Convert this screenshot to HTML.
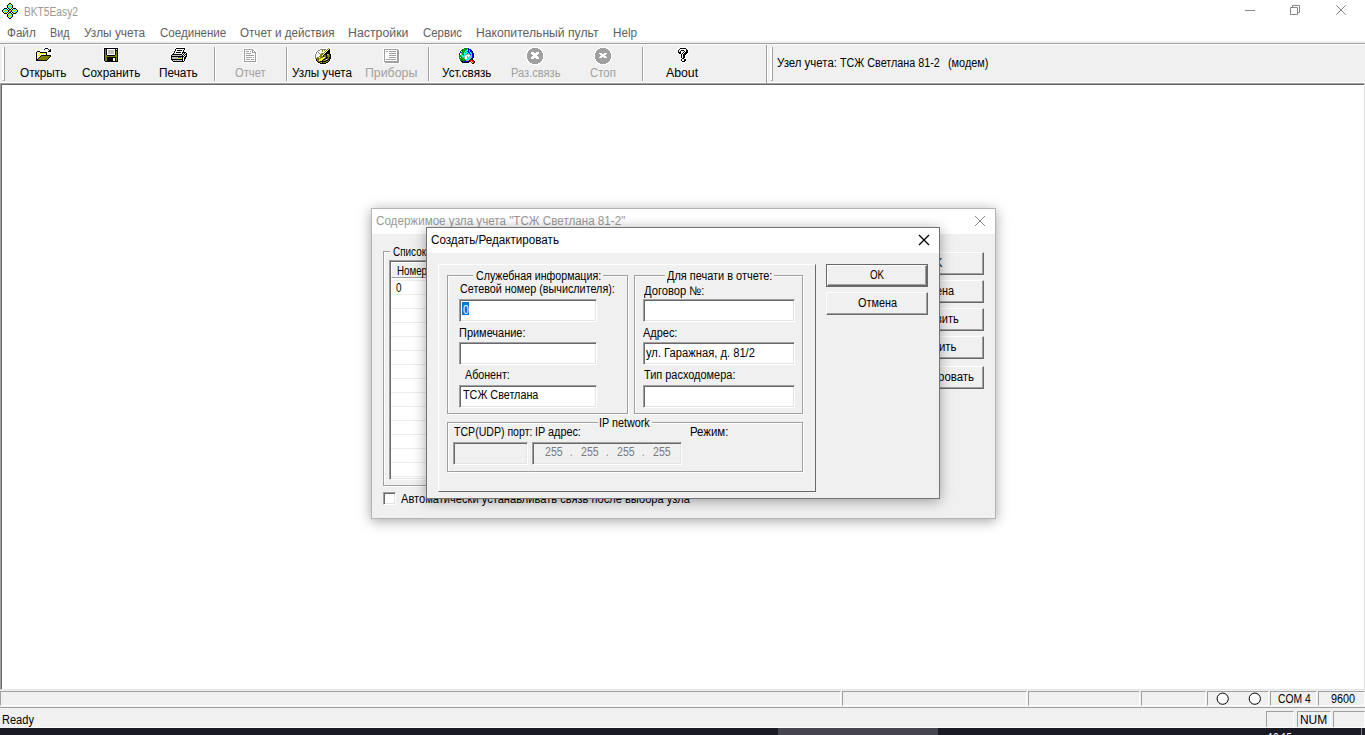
<!DOCTYPE html>
<html><head><meta charset="utf-8">
<style>
*{box-sizing:border-box;margin:0;padding:0}
html,body{width:1365px;height:735px;overflow:hidden;background:#fff;font-family:"Liberation Sans",sans-serif;}
.a{position:absolute}
.t{position:absolute;white-space:nowrap;line-height:1;transform-origin:0 0}
#titlebar{left:0;top:0;width:1365px;height:22px;background:#fff}
#menubar{left:0;top:22px;width:1365px;height:21px;background:#fff}
#toolbar{left:0;top:43px;width:1365px;height:40px;background:#f0f0f0;border-top:1px solid #a0a0a0;border-bottom:1px solid #fff;box-shadow:inset 0 1px 0 #fff}
.sep{position:absolute;top:47px;width:2px;height:34px;border-left:1px solid #a0a0a0;border-right:1px solid #fff}
#client{left:0;top:83px;width:1365px;height:607px;background:#fff;border:1px solid;border-color:#a0a0a0 #e3e3e3 #e3e3e3 #a0a0a0;box-shadow:inset 1px 1px 0 #696969}
#status1{left:0;top:690px;width:1365px;height:17px;background:#f0f0f0}
#status2{left:0;top:707px;width:1365px;height:21px;background:#f0f0f0;border-top:1px solid #a0a0a0}
#taskbar{left:0;top:728px;width:1365px;height:7px;background:#1a1a24}
.pane{position:absolute;top:691px;height:15px;border-left:1px solid #a0a0a0;border-top:1px solid #a0a0a0;border-right:1px solid #fff;border-bottom:1px solid #fff}
/* dialogs */
.dlg{position:absolute;background:#f0f0f0;}
.btn{position:absolute;background:#f0f0f0;border:1px solid;border-color:#fff #696969 #696969 #fff;box-shadow:inset -1px -1px 0 #a0a0a0}
.edit{position:absolute;background:#fff;border:1px solid;border-color:#a0a0a0 #fff #fff #a0a0a0;box-shadow:inset 1px 1px 0 #696969, inset -1px -1px 0 #e3e3e3}
.edit.dis{background:#f0f0f0}
.grp{position:absolute;border:1px solid #a0a0a0;box-shadow:inset 1px 1px 0 #fff, 1px 1px 0 #fff}
.cov{position:absolute;background:#f0f0f0;height:3px}
</style></head>
<body>
<!-- TITLE BAR -->
<div id="titlebar" class="a"></div>
<svg class="a" style="left:2px;top:3px" width="16" height="16" viewBox="0 0 16 16" shape-rendering="crispEdges"><rect x="7" y="0" width="2" height="1" fill="#000"/><rect x="6" y="1" width="1" height="1" fill="#000"/><rect x="7" y="1" width="1" height="1" fill="#00ffff"/><rect x="8" y="1" width="1" height="1" fill="#ffff00"/><rect x="9" y="1" width="1" height="1" fill="#000"/><rect x="5" y="2" width="1" height="1" fill="#000"/><rect x="6" y="2" width="1" height="1" fill="#00ffff"/><rect x="7" y="2" width="1" height="1" fill="#ffff00"/><rect x="8" y="2" width="1" height="1" fill="#00ffff"/><rect x="9" y="2" width="1" height="1" fill="#ffff00"/><rect x="10" y="2" width="1" height="1" fill="#000"/><rect x="5" y="3" width="1" height="1" fill="#000"/><rect x="6" y="3" width="1" height="1" fill="#ffff00"/><rect x="7" y="3" width="1" height="1" fill="#00ffff"/><rect x="8" y="3" width="1" height="1" fill="#ffff00"/><rect x="9" y="3" width="1" height="1" fill="#00ffff"/><rect x="10" y="3" width="1" height="1" fill="#000"/><rect x="5" y="4" width="1" height="1" fill="#000"/><rect x="6" y="4" width="1" height="1" fill="#00ffff"/><rect x="7" y="4" width="1" height="1" fill="#ffff00"/><rect x="8" y="4" width="1" height="1" fill="#00ffff"/><rect x="9" y="4" width="1" height="1" fill="#ffff00"/><rect x="10" y="4" width="1" height="1" fill="#000"/><rect x="2" y="5" width="3" height="1" fill="#000"/><rect x="6" y="5" width="1" height="1" fill="#000"/><rect x="7" y="5" width="1" height="1" fill="#00ffff"/><rect x="8" y="5" width="1" height="1" fill="#ffff00"/><rect x="9" y="5" width="1" height="1" fill="#000"/><rect x="11" y="5" width="3" height="1" fill="#000"/><rect x="1" y="6" width="1" height="1" fill="#000"/><rect x="2" y="6" width="1" height="1" fill="#00ffff"/><rect x="3" y="6" width="1" height="1" fill="#ffff00"/><rect x="4" y="6" width="1" height="1" fill="#00ffff"/><rect x="5" y="6" width="1" height="1" fill="#000"/><rect x="7" y="6" width="2" height="1" fill="#000"/><rect x="10" y="6" width="1" height="1" fill="#000"/><rect x="11" y="6" width="1" height="1" fill="#ffff00"/><rect x="12" y="6" width="1" height="1" fill="#00ffff"/><rect x="13" y="6" width="1" height="1" fill="#ffff00"/><rect x="14" y="6" width="1" height="1" fill="#000"/><rect x="0" y="7" width="1" height="1" fill="#000"/><rect x="1" y="7" width="1" height="1" fill="#00ffff"/><rect x="2" y="7" width="1" height="1" fill="#ffff00"/><rect x="3" y="7" width="1" height="1" fill="#00ffff"/><rect x="4" y="7" width="1" height="1" fill="#ffff00"/><rect x="5" y="7" width="1" height="1" fill="#00ffff"/><rect x="6" y="7" width="1" height="1" fill="#000"/><rect x="7" y="7" width="1" height="1" fill="#ff00ff"/><rect x="8" y="7" width="1" height="1" fill="#ffff00"/><rect x="9" y="7" width="1" height="1" fill="#000"/><rect x="10" y="7" width="1" height="1" fill="#ffff00"/><rect x="11" y="7" width="1" height="1" fill="#00ffff"/><rect x="12" y="7" width="1" height="1" fill="#ffff00"/><rect x="13" y="7" width="1" height="1" fill="#00ffff"/><rect x="14" y="7" width="1" height="1" fill="#ffff00"/><rect x="15" y="7" width="1" height="1" fill="#000"/><rect x="0" y="8" width="1" height="1" fill="#000"/><rect x="1" y="8" width="1" height="1" fill="#ffff00"/><rect x="2" y="8" width="1" height="1" fill="#00ffff"/><rect x="3" y="8" width="1" height="1" fill="#ffff00"/><rect x="4" y="8" width="1" height="1" fill="#00ffff"/><rect x="5" y="8" width="1" height="1" fill="#ffff00"/><rect x="6" y="8" width="1" height="1" fill="#000"/><rect x="7" y="8" width="1" height="1" fill="#ffff00"/><rect x="8" y="8" width="1" height="1" fill="#ff00ff"/><rect x="9" y="8" width="1" height="1" fill="#000"/><rect x="10" y="8" width="1" height="1" fill="#00ffff"/><rect x="11" y="8" width="1" height="1" fill="#ffff00"/><rect x="12" y="8" width="1" height="1" fill="#00ffff"/><rect x="13" y="8" width="1" height="1" fill="#ffff00"/><rect x="14" y="8" width="1" height="1" fill="#00ffff"/><rect x="15" y="8" width="1" height="1" fill="#000"/><rect x="1" y="9" width="1" height="1" fill="#000"/><rect x="2" y="9" width="1" height="1" fill="#ffff00"/><rect x="3" y="9" width="1" height="1" fill="#00ffff"/><rect x="4" y="9" width="1" height="1" fill="#ffff00"/><rect x="5" y="9" width="1" height="1" fill="#000"/><rect x="7" y="9" width="2" height="1" fill="#000"/><rect x="10" y="9" width="1" height="1" fill="#000"/><rect x="11" y="9" width="1" height="1" fill="#00ffff"/><rect x="12" y="9" width="1" height="1" fill="#ffff00"/><rect x="13" y="9" width="1" height="1" fill="#00ffff"/><rect x="14" y="9" width="1" height="1" fill="#000"/><rect x="2" y="10" width="3" height="1" fill="#000"/><rect x="6" y="10" width="1" height="1" fill="#000"/><rect x="7" y="10" width="1" height="1" fill="#ffff00"/><rect x="8" y="10" width="1" height="1" fill="#00ffff"/><rect x="9" y="10" width="1" height="1" fill="#000"/><rect x="11" y="10" width="3" height="1" fill="#000"/><rect x="5" y="11" width="1" height="1" fill="#000"/><rect x="6" y="11" width="1" height="1" fill="#ffff00"/><rect x="7" y="11" width="1" height="1" fill="#00ffff"/><rect x="8" y="11" width="1" height="1" fill="#ffff00"/><rect x="9" y="11" width="1" height="1" fill="#00ffff"/><rect x="10" y="11" width="1" height="1" fill="#000"/><rect x="5" y="12" width="1" height="1" fill="#000"/><rect x="6" y="12" width="1" height="1" fill="#00ffff"/><rect x="7" y="12" width="1" height="1" fill="#ffff00"/><rect x="8" y="12" width="1" height="1" fill="#00ffff"/><rect x="9" y="12" width="1" height="1" fill="#ffff00"/><rect x="10" y="12" width="1" height="1" fill="#000"/><rect x="5" y="13" width="1" height="1" fill="#000"/><rect x="6" y="13" width="1" height="1" fill="#ffff00"/><rect x="7" y="13" width="1" height="1" fill="#00ffff"/><rect x="8" y="13" width="1" height="1" fill="#ffff00"/><rect x="9" y="13" width="1" height="1" fill="#00ffff"/><rect x="10" y="13" width="1" height="1" fill="#000"/><rect x="6" y="14" width="1" height="1" fill="#000"/><rect x="7" y="14" width="1" height="1" fill="#ffff00"/><rect x="8" y="14" width="1" height="1" fill="#00ffff"/><rect x="9" y="14" width="1" height="1" fill="#000"/><rect x="7" y="15" width="2" height="1" fill="#000"/></svg>
<div class="t" style="left:24.20px;top:5.84px;font-size:12px;color:#999;transform:scaleX(0.8510);">BKT5Easy2</div>
<svg class="a" style="left:1240px;top:0" width="125" height="22" viewBox="0 0 125 22">
  <path d="M5 10.5h10" stroke="#868686" fill="none"/>
  <path d="M50.5 7.5h7v7h-7z M52.5 7.5v-2h7v7h-2" stroke="#868686" fill="none"/>
  <path d="M96.3 5.3l9.4 9.4M105.7 5.3l-9.4 9.4" stroke="#868686" fill="none"/>
</svg>
<!-- MENU BAR -->
<div id="menubar" class="a"></div>
<div class="a" style="left:0;top:41px;width:1365px;height:2px;background:#f0f0f0"></div>
<div class="t" style="left:7.20px;top:26.84px;font-size:12px;color:#606060;transform:scaleX(0.9729);">Файл</div>
<div class="t" style="left:50.30px;top:26.84px;font-size:12px;color:#606060;transform:scaleX(0.8937);">Вид</div>
<div class="t" style="left:83.60px;top:26.84px;font-size:12px;color:#606060;transform:scaleX(0.9877);">Узлы учета</div>
<div class="t" style="left:159.50px;top:26.84px;font-size:12px;color:#606060;transform:scaleX(0.9626);">Соединение</div>
<div class="t" style="left:240.00px;top:26.84px;font-size:12px;color:#606060;transform:scaleX(0.9673);">Отчет и действия</div>
<div class="t" style="left:348.00px;top:26.84px;font-size:12px;color:#606060;transform:scaleX(1.0269);">Настройки</div>
<div class="t" style="left:422.50px;top:26.84px;font-size:12px;color:#606060;transform:scaleX(0.9491);">Сервис</div>
<div class="t" style="left:476.00px;top:26.84px;font-size:12px;color:#606060;transform:scaleX(1.0138);">Накопительный пульт</div>
<div class="t" style="left:613.00px;top:26.84px;font-size:12px;color:#606060;transform:scaleX(0.9758);">Help</div>
<!-- TOOLBAR -->
<div id="toolbar" class="a"></div>
<div class="a" style="left:2px;top:47px;width:3px;height:34px;border-left:2px solid #fff;border-right:1px solid #a0a0a0;border-bottom:1px solid #a0a0a0"></div>
<svg class="a" style="left:35px;top:47px" width="18" height="15" viewBox="0 0 18 15" shape-rendering="crispEdges"><rect x="9" y="0" width="5" height="1" fill="#fff"/><rect x="8" y="1" width="2" height="1" fill="#fff"/><rect x="10" y="1" width="3" height="1" fill="#000"/><rect x="13" y="1" width="4" height="1" fill="#fff"/><rect x="8" y="2" width="1" height="1" fill="#fff"/><rect x="9" y="2" width="1" height="1" fill="#000"/><rect x="10" y="2" width="3" height="1" fill="#fff"/><rect x="13" y="2" width="1" height="1" fill="#000"/><rect x="14" y="2" width="1" height="1" fill="#fff"/><rect x="15" y="2" width="1" height="1" fill="#000"/><rect x="16" y="2" width="1" height="1" fill="#fff"/><rect x="1" y="3" width="5" height="1" fill="#fff"/><rect x="8" y="3" width="3" height="1" fill="#fff"/><rect x="12" y="3" width="2" height="1" fill="#fff"/><rect x="14" y="3" width="2" height="1" fill="#000"/><rect x="16" y="3" width="1" height="1" fill="#fff"/><rect x="0" y="4" width="2" height="1" fill="#fff"/><rect x="2" y="4" width="3" height="1" fill="#000"/><rect x="5" y="4" width="8" height="1" fill="#fff"/><rect x="13" y="4" width="3" height="1" fill="#000"/><rect x="16" y="4" width="1" height="1" fill="#fff"/><rect x="0" y="5" width="1" height="1" fill="#fff"/><rect x="1" y="5" width="1" height="1" fill="#000"/><rect x="2" y="5" width="1" height="1" fill="#ffff00"/><rect x="3" y="5" width="1" height="1" fill="#fff"/><rect x="4" y="5" width="1" height="1" fill="#ffff00"/><rect x="5" y="5" width="7" height="1" fill="#000"/><rect x="12" y="5" width="5" height="1" fill="#fff"/><rect x="0" y="6" width="1" height="1" fill="#fff"/><rect x="1" y="6" width="1" height="1" fill="#000"/><rect x="2" y="6" width="1" height="1" fill="#fff"/><rect x="3" y="6" width="1" height="1" fill="#ffff00"/><rect x="4" y="6" width="1" height="1" fill="#fff"/><rect x="5" y="6" width="1" height="1" fill="#ffff00"/><rect x="6" y="6" width="1" height="1" fill="#fff"/><rect x="7" y="6" width="1" height="1" fill="#ffff00"/><rect x="8" y="6" width="1" height="1" fill="#fff"/><rect x="9" y="6" width="1" height="1" fill="#ffff00"/><rect x="10" y="6" width="1" height="1" fill="#fff"/><rect x="11" y="6" width="1" height="1" fill="#000"/><rect x="12" y="6" width="1" height="1" fill="#fff"/><rect x="0" y="7" width="1" height="1" fill="#fff"/><rect x="1" y="7" width="1" height="1" fill="#000"/><rect x="2" y="7" width="1" height="1" fill="#ffff00"/><rect x="3" y="7" width="1" height="1" fill="#fff"/><rect x="4" y="7" width="1" height="1" fill="#ffff00"/><rect x="5" y="7" width="1" height="1" fill="#fff"/><rect x="6" y="7" width="1" height="1" fill="#ffff00"/><rect x="7" y="7" width="1" height="1" fill="#fff"/><rect x="8" y="7" width="1" height="1" fill="#ffff00"/><rect x="9" y="7" width="1" height="1" fill="#fff"/><rect x="10" y="7" width="1" height="1" fill="#ffff00"/><rect x="11" y="7" width="1" height="1" fill="#000"/><rect x="12" y="7" width="5" height="1" fill="#fff"/><rect x="0" y="8" width="1" height="1" fill="#fff"/><rect x="1" y="8" width="1" height="1" fill="#000"/><rect x="2" y="8" width="1" height="1" fill="#fff"/><rect x="3" y="8" width="1" height="1" fill="#ffff00"/><rect x="4" y="8" width="1" height="1" fill="#fff"/><rect x="5" y="8" width="1" height="1" fill="#ffff00"/><rect x="6" y="8" width="10" height="1" fill="#000"/><rect x="16" y="8" width="1" height="1" fill="#fff"/><rect x="0" y="9" width="1" height="1" fill="#fff"/><rect x="1" y="9" width="1" height="1" fill="#000"/><rect x="2" y="9" width="1" height="1" fill="#ffff00"/><rect x="3" y="9" width="1" height="1" fill="#fff"/><rect x="4" y="9" width="1" height="1" fill="#ffff00"/><rect x="5" y="9" width="1" height="1" fill="#000"/><rect x="6" y="9" width="9" height="1" fill="#808000"/><rect x="15" y="9" width="1" height="1" fill="#000"/><rect x="16" y="9" width="1" height="1" fill="#fff"/><rect x="0" y="10" width="1" height="1" fill="#fff"/><rect x="1" y="10" width="1" height="1" fill="#000"/><rect x="2" y="10" width="1" height="1" fill="#fff"/><rect x="3" y="10" width="1" height="1" fill="#ffff00"/><rect x="4" y="10" width="1" height="1" fill="#000"/><rect x="5" y="10" width="9" height="1" fill="#808000"/><rect x="14" y="10" width="1" height="1" fill="#000"/><rect x="15" y="10" width="2" height="1" fill="#fff"/><rect x="0" y="11" width="1" height="1" fill="#fff"/><rect x="1" y="11" width="1" height="1" fill="#000"/><rect x="2" y="11" width="1" height="1" fill="#ffff00"/><rect x="3" y="11" width="1" height="1" fill="#000"/><rect x="4" y="11" width="9" height="1" fill="#808000"/><rect x="13" y="11" width="1" height="1" fill="#000"/><rect x="14" y="11" width="2" height="1" fill="#fff"/><rect x="0" y="12" width="1" height="1" fill="#fff"/><rect x="1" y="12" width="2" height="1" fill="#000"/><rect x="3" y="12" width="9" height="1" fill="#808000"/><rect x="12" y="12" width="1" height="1" fill="#000"/><rect x="13" y="12" width="2" height="1" fill="#fff"/><rect x="0" y="13" width="1" height="1" fill="#fff"/><rect x="1" y="13" width="11" height="1" fill="#000"/><rect x="12" y="13" width="2" height="1" fill="#fff"/><rect x="0" y="14" width="13" height="1" fill="#fff"/></svg>
<svg class="a" style="left:103px;top:47px" width="16" height="16" viewBox="0 0 16 16" shape-rendering="crispEdges"><rect x="0" y="0" width="16" height="1" fill="#fff"/><rect x="0" y="1" width="1" height="1" fill="#fff"/><rect x="1" y="1" width="14" height="1" fill="#000"/><rect x="15" y="1" width="1" height="1" fill="#fff"/><rect x="0" y="2" width="1" height="1" fill="#fff"/><rect x="1" y="2" width="1" height="1" fill="#000"/><rect x="2" y="2" width="1" height="1" fill="#808000"/><rect x="3" y="2" width="1" height="1" fill="#000"/><rect x="4" y="2" width="8" height="1" fill="#fff"/><rect x="12" y="2" width="1" height="1" fill="#000"/><rect x="13" y="2" width="1" height="1" fill="#fff"/><rect x="14" y="2" width="1" height="1" fill="#000"/><rect x="15" y="2" width="1" height="1" fill="#fff"/><rect x="0" y="3" width="1" height="1" fill="#fff"/><rect x="1" y="3" width="1" height="1" fill="#000"/><rect x="2" y="3" width="1" height="1" fill="#808000"/><rect x="3" y="3" width="1" height="1" fill="#000"/><rect x="4" y="3" width="1" height="1" fill="#fff"/><rect x="5" y="3" width="6" height="1" fill="#c0c0c0"/><rect x="11" y="3" width="1" height="1" fill="#fff"/><rect x="12" y="3" width="3" height="1" fill="#000"/><rect x="15" y="3" width="1" height="1" fill="#fff"/><rect x="0" y="4" width="1" height="1" fill="#fff"/><rect x="1" y="4" width="1" height="1" fill="#000"/><rect x="2" y="4" width="1" height="1" fill="#808000"/><rect x="3" y="4" width="1" height="1" fill="#000"/><rect x="4" y="4" width="1" height="1" fill="#fff"/><rect x="5" y="4" width="6" height="1" fill="#c0c0c0"/><rect x="11" y="4" width="1" height="1" fill="#fff"/><rect x="12" y="4" width="1" height="1" fill="#000"/><rect x="13" y="4" width="1" height="1" fill="#808000"/><rect x="14" y="4" width="1" height="1" fill="#000"/><rect x="15" y="4" width="1" height="1" fill="#fff"/><rect x="0" y="5" width="1" height="1" fill="#fff"/><rect x="1" y="5" width="1" height="1" fill="#000"/><rect x="2" y="5" width="1" height="1" fill="#808000"/><rect x="3" y="5" width="1" height="1" fill="#000"/><rect x="4" y="5" width="1" height="1" fill="#fff"/><rect x="5" y="5" width="6" height="1" fill="#c0c0c0"/><rect x="11" y="5" width="1" height="1" fill="#fff"/><rect x="12" y="5" width="1" height="1" fill="#000"/><rect x="13" y="5" width="1" height="1" fill="#808000"/><rect x="14" y="5" width="1" height="1" fill="#000"/><rect x="15" y="5" width="1" height="1" fill="#fff"/><rect x="0" y="6" width="1" height="1" fill="#fff"/><rect x="1" y="6" width="1" height="1" fill="#000"/><rect x="2" y="6" width="1" height="1" fill="#808000"/><rect x="3" y="6" width="1" height="1" fill="#000"/><rect x="4" y="6" width="1" height="1" fill="#fff"/><rect x="5" y="6" width="6" height="1" fill="#c0c0c0"/><rect x="11" y="6" width="1" height="1" fill="#fff"/><rect x="12" y="6" width="1" height="1" fill="#000"/><rect x="13" y="6" width="1" height="1" fill="#808000"/><rect x="14" y="6" width="1" height="1" fill="#000"/><rect x="15" y="6" width="1" height="1" fill="#fff"/><rect x="0" y="7" width="1" height="1" fill="#fff"/><rect x="1" y="7" width="1" height="1" fill="#000"/><rect x="2" y="7" width="1" height="1" fill="#808000"/><rect x="3" y="7" width="1" height="1" fill="#000"/><rect x="4" y="7" width="8" height="1" fill="#fff"/><rect x="12" y="7" width="1" height="1" fill="#000"/><rect x="13" y="7" width="1" height="1" fill="#808000"/><rect x="14" y="7" width="1" height="1" fill="#000"/><rect x="15" y="7" width="1" height="1" fill="#fff"/><rect x="0" y="8" width="1" height="1" fill="#fff"/><rect x="1" y="8" width="1" height="1" fill="#000"/><rect x="2" y="8" width="2" height="1" fill="#808000"/><rect x="4" y="8" width="8" height="1" fill="#000"/><rect x="12" y="8" width="2" height="1" fill="#808000"/><rect x="14" y="8" width="1" height="1" fill="#000"/><rect x="15" y="8" width="1" height="1" fill="#fff"/><rect x="0" y="9" width="1" height="1" fill="#fff"/><rect x="1" y="9" width="1" height="1" fill="#000"/><rect x="2" y="9" width="12" height="1" fill="#808000"/><rect x="14" y="9" width="1" height="1" fill="#000"/><rect x="15" y="9" width="1" height="1" fill="#fff"/><rect x="0" y="10" width="1" height="1" fill="#fff"/><rect x="1" y="10" width="1" height="1" fill="#000"/><rect x="2" y="10" width="2" height="1" fill="#808000"/><rect x="4" y="10" width="9" height="1" fill="#000"/><rect x="13" y="10" width="1" height="1" fill="#808000"/><rect x="14" y="10" width="1" height="1" fill="#000"/><rect x="15" y="10" width="1" height="1" fill="#fff"/><rect x="0" y="11" width="1" height="1" fill="#fff"/><rect x="1" y="11" width="1" height="1" fill="#000"/><rect x="2" y="11" width="2" height="1" fill="#808000"/><rect x="4" y="11" width="6" height="1" fill="#000"/><rect x="10" y="11" width="2" height="1" fill="#fff"/><rect x="12" y="11" width="1" height="1" fill="#000"/><rect x="13" y="11" width="1" height="1" fill="#808000"/><rect x="14" y="11" width="1" height="1" fill="#000"/><rect x="15" y="11" width="1" height="1" fill="#fff"/><rect x="0" y="12" width="1" height="1" fill="#fff"/><rect x="1" y="12" width="1" height="1" fill="#000"/><rect x="2" y="12" width="2" height="1" fill="#808000"/><rect x="4" y="12" width="6" height="1" fill="#000"/><rect x="10" y="12" width="2" height="1" fill="#fff"/><rect x="12" y="12" width="1" height="1" fill="#000"/><rect x="13" y="12" width="1" height="1" fill="#808000"/><rect x="14" y="12" width="1" height="1" fill="#000"/><rect x="15" y="12" width="1" height="1" fill="#fff"/><rect x="0" y="13" width="1" height="1" fill="#fff"/><rect x="1" y="13" width="1" height="1" fill="#000"/><rect x="2" y="13" width="2" height="1" fill="#808000"/><rect x="4" y="13" width="6" height="1" fill="#000"/><rect x="10" y="13" width="2" height="1" fill="#fff"/><rect x="12" y="13" width="1" height="1" fill="#000"/><rect x="13" y="13" width="1" height="1" fill="#808000"/><rect x="14" y="13" width="1" height="1" fill="#000"/><rect x="15" y="13" width="1" height="1" fill="#fff"/><rect x="0" y="14" width="2" height="1" fill="#fff"/><rect x="2" y="14" width="13" height="1" fill="#000"/><rect x="15" y="14" width="1" height="1" fill="#fff"/><rect x="1" y="15" width="15" height="1" fill="#fff"/></svg>
<svg class="a" style="left:170px;top:47px" width="18" height="16" viewBox="0 0 18 16" shape-rendering="crispEdges"><rect x="5" y="0" width="11" height="1" fill="#fff"/><rect x="4" y="1" width="2" height="1" fill="#fff"/><rect x="6" y="1" width="9" height="1" fill="#000"/><rect x="15" y="1" width="1" height="1" fill="#fff"/><rect x="4" y="2" width="1" height="1" fill="#fff"/><rect x="5" y="2" width="1" height="1" fill="#000"/><rect x="6" y="2" width="8" height="1" fill="#fff"/><rect x="14" y="2" width="1" height="1" fill="#000"/><rect x="15" y="2" width="1" height="1" fill="#fff"/><rect x="3" y="3" width="2" height="1" fill="#fff"/><rect x="5" y="3" width="1" height="1" fill="#000"/><rect x="6" y="3" width="1" height="1" fill="#fff"/><rect x="7" y="3" width="5" height="1" fill="#000"/><rect x="12" y="3" width="1" height="1" fill="#fff"/><rect x="13" y="3" width="1" height="1" fill="#000"/><rect x="14" y="3" width="2" height="1" fill="#fff"/><rect x="3" y="4" width="1" height="1" fill="#fff"/><rect x="4" y="4" width="1" height="1" fill="#000"/><rect x="5" y="4" width="8" height="1" fill="#fff"/><rect x="13" y="4" width="1" height="1" fill="#000"/><rect x="14" y="4" width="3" height="1" fill="#fff"/><rect x="2" y="5" width="2" height="1" fill="#fff"/><rect x="4" y="5" width="1" height="1" fill="#000"/><rect x="5" y="5" width="1" height="1" fill="#fff"/><rect x="6" y="5" width="5" height="1" fill="#000"/><rect x="11" y="5" width="1" height="1" fill="#fff"/><rect x="12" y="5" width="4" height="1" fill="#000"/><rect x="16" y="5" width="2" height="1" fill="#fff"/><rect x="1" y="6" width="2" height="1" fill="#fff"/><rect x="3" y="6" width="1" height="1" fill="#000"/><rect x="4" y="6" width="8" height="1" fill="#fff"/><rect x="12" y="6" width="1" height="1" fill="#000"/><rect x="13" y="6" width="1" height="1" fill="#fff"/><rect x="14" y="6" width="1" height="1" fill="#000"/><rect x="15" y="6" width="1" height="1" fill="#fff"/><rect x="16" y="6" width="1" height="1" fill="#000"/><rect x="17" y="6" width="1" height="1" fill="#fff"/><rect x="0" y="7" width="2" height="1" fill="#fff"/><rect x="2" y="7" width="10" height="1" fill="#000"/><rect x="12" y="7" width="1" height="1" fill="#fff"/><rect x="13" y="7" width="1" height="1" fill="#000"/><rect x="14" y="7" width="1" height="1" fill="#fff"/><rect x="15" y="7" width="2" height="1" fill="#000"/><rect x="17" y="7" width="1" height="1" fill="#fff"/><rect x="0" y="8" width="1" height="1" fill="#fff"/><rect x="1" y="8" width="1" height="1" fill="#000"/><rect x="2" y="8" width="10" height="1" fill="#c0c0c0"/><rect x="12" y="8" width="1" height="1" fill="#000"/><rect x="13" y="8" width="1" height="1" fill="#fff"/><rect x="14" y="8" width="1" height="1" fill="#000"/><rect x="15" y="8" width="1" height="1" fill="#fff"/><rect x="16" y="8" width="1" height="1" fill="#000"/><rect x="17" y="8" width="1" height="1" fill="#fff"/><rect x="0" y="9" width="1" height="1" fill="#fff"/><rect x="1" y="9" width="13" height="1" fill="#000"/><rect x="14" y="9" width="1" height="1" fill="#fff"/><rect x="15" y="9" width="2" height="1" fill="#000"/><rect x="17" y="9" width="1" height="1" fill="#fff"/><rect x="0" y="10" width="1" height="1" fill="#fff"/><rect x="1" y="10" width="1" height="1" fill="#000"/><rect x="2" y="10" width="6" height="1" fill="#c0c0c0"/><rect x="8" y="10" width="3" height="1" fill="#404080"/><rect x="11" y="10" width="1" height="1" fill="#c0c0c0"/><rect x="12" y="10" width="1" height="1" fill="#000"/><rect x="13" y="10" width="1" height="1" fill="#fff"/><rect x="14" y="10" width="2" height="1" fill="#000"/><rect x="16" y="10" width="2" height="1" fill="#fff"/><rect x="0" y="11" width="1" height="1" fill="#fff"/><rect x="1" y="11" width="1" height="1" fill="#000"/><rect x="2" y="11" width="6" height="1" fill="#c0c0c0"/><rect x="8" y="11" width="3" height="1" fill="#ffff00"/><rect x="11" y="11" width="1" height="1" fill="#c0c0c0"/><rect x="12" y="11" width="1" height="1" fill="#000"/><rect x="13" y="11" width="1" height="1" fill="#fff"/><rect x="14" y="11" width="2" height="1" fill="#000"/><rect x="16" y="11" width="1" height="1" fill="#fff"/><rect x="0" y="12" width="1" height="1" fill="#fff"/><rect x="1" y="12" width="12" height="1" fill="#000"/><rect x="13" y="12" width="1" height="1" fill="#fff"/><rect x="14" y="12" width="1" height="1" fill="#000"/><rect x="15" y="12" width="2" height="1" fill="#fff"/><rect x="0" y="13" width="2" height="1" fill="#fff"/><rect x="2" y="13" width="1" height="1" fill="#000"/><rect x="3" y="13" width="9" height="1" fill="#c0c0c0"/><rect x="12" y="13" width="1" height="1" fill="#000"/><rect x="13" y="13" width="1" height="1" fill="#fff"/><rect x="14" y="13" width="1" height="1" fill="#000"/><rect x="15" y="13" width="1" height="1" fill="#fff"/><rect x="1" y="14" width="2" height="1" fill="#fff"/><rect x="3" y="14" width="11" height="1" fill="#000"/><rect x="14" y="14" width="2" height="1" fill="#fff"/><rect x="2" y="15" width="13" height="1" fill="#fff"/></svg>
<svg class="a" style="left:243px;top:48px" width="14" height="15" viewBox="0 0 14 15" shape-rendering="crispEdges"><rect x="0" y="0" width="11" height="1" fill="#fff"/><rect x="0" y="1" width="1" height="1" fill="#fff"/><rect x="1" y="1" width="9" height="1" fill="#a0a0a0"/><rect x="10" y="1" width="2" height="1" fill="#fff"/><rect x="0" y="2" width="1" height="1" fill="#fff"/><rect x="1" y="2" width="1" height="1" fill="#a0a0a0"/><rect x="2" y="2" width="7" height="1" fill="#fff"/><rect x="9" y="2" width="2" height="1" fill="#a0a0a0"/><rect x="11" y="2" width="2" height="1" fill="#fff"/><rect x="0" y="3" width="1" height="1" fill="#fff"/><rect x="1" y="3" width="1" height="1" fill="#a0a0a0"/><rect x="2" y="3" width="1" height="1" fill="#fff"/><rect x="3" y="3" width="3" height="1" fill="#a0a0a0"/><rect x="6" y="3" width="1" height="1" fill="#fff"/><rect x="7" y="3" width="1" height="1" fill="#a0a0a0"/><rect x="8" y="3" width="1" height="1" fill="#fff"/><rect x="9" y="3" width="1" height="1" fill="#a0a0a0"/><rect x="10" y="3" width="1" height="1" fill="#fff"/><rect x="11" y="3" width="1" height="1" fill="#a0a0a0"/><rect x="12" y="3" width="2" height="1" fill="#fff"/><rect x="0" y="4" width="1" height="1" fill="#fff"/><rect x="1" y="4" width="1" height="1" fill="#a0a0a0"/><rect x="2" y="4" width="7" height="1" fill="#fff"/><rect x="9" y="4" width="4" height="1" fill="#a0a0a0"/><rect x="13" y="4" width="1" height="1" fill="#fff"/><rect x="0" y="5" width="1" height="1" fill="#fff"/><rect x="1" y="5" width="1" height="1" fill="#a0a0a0"/><rect x="2" y="5" width="1" height="1" fill="#fff"/><rect x="3" y="5" width="5" height="1" fill="#a0a0a0"/><rect x="8" y="5" width="4" height="1" fill="#fff"/><rect x="12" y="5" width="1" height="1" fill="#a0a0a0"/><rect x="13" y="5" width="1" height="1" fill="#fff"/><rect x="0" y="6" width="1" height="1" fill="#fff"/><rect x="1" y="6" width="1" height="1" fill="#a0a0a0"/><rect x="2" y="6" width="10" height="1" fill="#fff"/><rect x="12" y="6" width="1" height="1" fill="#a0a0a0"/><rect x="13" y="6" width="1" height="1" fill="#fff"/><rect x="0" y="7" width="1" height="1" fill="#fff"/><rect x="1" y="7" width="1" height="1" fill="#a0a0a0"/><rect x="2" y="7" width="1" height="1" fill="#fff"/><rect x="3" y="7" width="8" height="1" fill="#a0a0a0"/><rect x="11" y="7" width="1" height="1" fill="#fff"/><rect x="12" y="7" width="1" height="1" fill="#a0a0a0"/><rect x="13" y="7" width="1" height="1" fill="#fff"/><rect x="0" y="8" width="1" height="1" fill="#fff"/><rect x="1" y="8" width="1" height="1" fill="#a0a0a0"/><rect x="2" y="8" width="10" height="1" fill="#fff"/><rect x="12" y="8" width="1" height="1" fill="#a0a0a0"/><rect x="13" y="8" width="1" height="1" fill="#fff"/><rect x="0" y="9" width="1" height="1" fill="#fff"/><rect x="1" y="9" width="1" height="1" fill="#a0a0a0"/><rect x="2" y="9" width="1" height="1" fill="#fff"/><rect x="3" y="9" width="6" height="1" fill="#a0a0a0"/><rect x="9" y="9" width="1" height="1" fill="#fff"/><rect x="10" y="9" width="1" height="1" fill="#a0a0a0"/><rect x="11" y="9" width="1" height="1" fill="#fff"/><rect x="12" y="9" width="1" height="1" fill="#a0a0a0"/><rect x="13" y="9" width="1" height="1" fill="#fff"/><rect x="0" y="10" width="1" height="1" fill="#fff"/><rect x="1" y="10" width="1" height="1" fill="#a0a0a0"/><rect x="2" y="10" width="10" height="1" fill="#fff"/><rect x="12" y="10" width="1" height="1" fill="#a0a0a0"/><rect x="13" y="10" width="1" height="1" fill="#fff"/><rect x="0" y="11" width="1" height="1" fill="#fff"/><rect x="1" y="11" width="1" height="1" fill="#a0a0a0"/><rect x="2" y="11" width="1" height="1" fill="#fff"/><rect x="3" y="11" width="4" height="1" fill="#a0a0a0"/><rect x="7" y="11" width="1" height="1" fill="#fff"/><rect x="8" y="11" width="3" height="1" fill="#a0a0a0"/><rect x="11" y="11" width="1" height="1" fill="#fff"/><rect x="12" y="11" width="1" height="1" fill="#a0a0a0"/><rect x="13" y="11" width="1" height="1" fill="#fff"/><rect x="0" y="12" width="1" height="1" fill="#fff"/><rect x="1" y="12" width="1" height="1" fill="#a0a0a0"/><rect x="2" y="12" width="10" height="1" fill="#fff"/><rect x="12" y="12" width="1" height="1" fill="#a0a0a0"/><rect x="13" y="12" width="1" height="1" fill="#fff"/><rect x="0" y="13" width="1" height="1" fill="#fff"/><rect x="1" y="13" width="12" height="1" fill="#a0a0a0"/><rect x="13" y="13" width="1" height="1" fill="#fff"/><rect x="0" y="14" width="14" height="1" fill="#fff"/></svg>
<svg class="a" style="left:314px;top:47px" width="18" height="18" viewBox="0 0 18 18" shape-rendering="crispEdges"><rect x="13" y="0" width="3" height="1" fill="#fff"/><rect x="5" y="1" width="9" height="1" fill="#fff"/><rect x="14" y="1" width="1" height="1" fill="#808000"/><rect x="15" y="1" width="2" height="1" fill="#fff"/><rect x="3" y="2" width="3" height="1" fill="#fff"/><rect x="6" y="2" width="6" height="1" fill="#808080"/><rect x="12" y="2" width="1" height="1" fill="#fff"/><rect x="13" y="2" width="1" height="1" fill="#808000"/><rect x="14" y="2" width="1" height="1" fill="#fff"/><rect x="15" y="2" width="1" height="1" fill="#000"/><rect x="16" y="2" width="1" height="1" fill="#fff"/><rect x="2" y="3" width="2" height="1" fill="#fff"/><rect x="4" y="3" width="2" height="1" fill="#808080"/><rect x="6" y="3" width="2" height="1" fill="#fff"/><rect x="8" y="3" width="1" height="1" fill="#808000"/><rect x="9" y="3" width="1" height="1" fill="#fff"/><rect x="10" y="3" width="1" height="1" fill="#808000"/><rect x="11" y="3" width="1" height="1" fill="#fff"/><rect x="12" y="3" width="1" height="1" fill="#808000"/><rect x="13" y="3" width="1" height="1" fill="#fff"/><rect x="14" y="3" width="2" height="1" fill="#000"/><rect x="16" y="3" width="1" height="1" fill="#fff"/><rect x="1" y="4" width="2" height="1" fill="#fff"/><rect x="3" y="4" width="1" height="1" fill="#808080"/><rect x="4" y="4" width="4" height="1" fill="#fff"/><rect x="8" y="4" width="1" height="1" fill="#808000"/><rect x="9" y="4" width="2" height="1" fill="#fff"/><rect x="11" y="4" width="1" height="1" fill="#808000"/><rect x="12" y="4" width="1" height="1" fill="#fff"/><rect x="13" y="4" width="3" height="1" fill="#000"/><rect x="16" y="4" width="1" height="1" fill="#fff"/><rect x="1" y="5" width="1" height="1" fill="#fff"/><rect x="2" y="5" width="1" height="1" fill="#808080"/><rect x="3" y="5" width="1" height="1" fill="#fff"/><rect x="4" y="5" width="1" height="1" fill="#808080"/><rect x="5" y="5" width="5" height="1" fill="#fff"/><rect x="10" y="5" width="1" height="1" fill="#808000"/><rect x="11" y="5" width="1" height="1" fill="#fff"/><rect x="12" y="5" width="4" height="1" fill="#000"/><rect x="16" y="5" width="1" height="1" fill="#fff"/><rect x="0" y="6" width="2" height="1" fill="#fff"/><rect x="2" y="6" width="1" height="1" fill="#808080"/><rect x="3" y="6" width="2" height="1" fill="#fff"/><rect x="5" y="6" width="1" height="1" fill="#808080"/><rect x="6" y="6" width="1" height="1" fill="#fff"/><rect x="7" y="6" width="3" height="1" fill="#808000"/><rect x="10" y="6" width="1" height="1" fill="#fff"/><rect x="11" y="6" width="5" height="1" fill="#000"/><rect x="16" y="6" width="2" height="1" fill="#fff"/><rect x="0" y="7" width="1" height="1" fill="#fff"/><rect x="1" y="7" width="1" height="1" fill="#808080"/><rect x="2" y="7" width="4" height="1" fill="#fff"/><rect x="6" y="7" width="3" height="1" fill="#808000"/><rect x="9" y="7" width="1" height="1" fill="#fff"/><rect x="10" y="7" width="3" height="1" fill="#000"/><rect x="13" y="7" width="2" height="1" fill="#c0c0c0"/><rect x="15" y="7" width="2" height="1" fill="#000"/><rect x="17" y="7" width="1" height="1" fill="#fff"/><rect x="0" y="8" width="1" height="1" fill="#fff"/><rect x="1" y="8" width="1" height="1" fill="#808080"/><rect x="2" y="8" width="4" height="1" fill="#fff"/><rect x="6" y="8" width="2" height="1" fill="#808000"/><rect x="8" y="8" width="1" height="1" fill="#fff"/><rect x="9" y="8" width="1" height="1" fill="#000"/><rect x="10" y="8" width="2" height="1" fill="#808000"/><rect x="12" y="8" width="1" height="1" fill="#000"/><rect x="13" y="8" width="3" height="1" fill="#808000"/><rect x="16" y="8" width="1" height="1" fill="#000"/><rect x="17" y="8" width="1" height="1" fill="#fff"/><rect x="0" y="9" width="1" height="1" fill="#fff"/><rect x="1" y="9" width="1" height="1" fill="#808080"/><rect x="2" y="9" width="3" height="1" fill="#fff"/><rect x="5" y="9" width="4" height="1" fill="#808000"/><rect x="9" y="9" width="1" height="1" fill="#000"/><rect x="10" y="9" width="2" height="1" fill="#808000"/><rect x="12" y="9" width="1" height="1" fill="#000"/><rect x="13" y="9" width="3" height="1" fill="#808000"/><rect x="16" y="9" width="1" height="1" fill="#000"/><rect x="17" y="9" width="1" height="1" fill="#fff"/><rect x="0" y="10" width="1" height="1" fill="#fff"/><rect x="1" y="10" width="1" height="1" fill="#808080"/><rect x="2" y="10" width="1" height="1" fill="#fff"/><rect x="3" y="10" width="2" height="1" fill="#808000"/><rect x="5" y="10" width="1" height="1" fill="#fff"/><rect x="6" y="10" width="3" height="1" fill="#808000"/><rect x="9" y="10" width="1" height="1" fill="#ffff00"/><rect x="10" y="10" width="1" height="1" fill="#fff"/><rect x="11" y="10" width="1" height="1" fill="#808000"/><rect x="12" y="10" width="2" height="1" fill="#000"/><rect x="14" y="10" width="1" height="1" fill="#808000"/><rect x="15" y="10" width="2" height="1" fill="#000"/><rect x="17" y="10" width="1" height="1" fill="#fff"/><rect x="0" y="11" width="1" height="1" fill="#fff"/><rect x="1" y="11" width="1" height="1" fill="#808080"/><rect x="2" y="11" width="5" height="1" fill="#808000"/><rect x="7" y="11" width="2" height="1" fill="#ffff00"/><rect x="9" y="11" width="1" height="1" fill="#fff"/><rect x="10" y="11" width="1" height="1" fill="#808000"/><rect x="11" y="11" width="2" height="1" fill="#000"/><rect x="13" y="11" width="2" height="1" fill="#808000"/><rect x="15" y="11" width="2" height="1" fill="#000"/><rect x="17" y="11" width="1" height="1" fill="#fff"/><rect x="0" y="12" width="2" height="1" fill="#fff"/><rect x="2" y="12" width="1" height="1" fill="#000"/><rect x="3" y="12" width="1" height="1" fill="#808000"/><rect x="4" y="12" width="1" height="1" fill="#c00000"/><rect x="5" y="12" width="2" height="1" fill="#ffff00"/><rect x="7" y="12" width="1" height="1" fill="#fff"/><rect x="8" y="12" width="1" height="1" fill="#ffff00"/><rect x="9" y="12" width="2" height="1" fill="#000"/><rect x="11" y="12" width="1" height="1" fill="#808000"/><rect x="12" y="12" width="1" height="1" fill="#fff"/><rect x="13" y="12" width="1" height="1" fill="#808000"/><rect x="14" y="12" width="2" height="1" fill="#000"/><rect x="16" y="12" width="2" height="1" fill="#fff"/><rect x="1" y="13" width="1" height="1" fill="#fff"/><rect x="2" y="13" width="1" height="1" fill="#000"/><rect x="3" y="13" width="2" height="1" fill="#808000"/><rect x="5" y="13" width="3" height="1" fill="#ffff00"/><rect x="8" y="13" width="1" height="1" fill="#000"/><rect x="9" y="13" width="3" height="1" fill="#808000"/><rect x="12" y="13" width="2" height="1" fill="#000"/><rect x="14" y="13" width="1" height="1" fill="#808000"/><rect x="15" y="13" width="1" height="1" fill="#000"/><rect x="16" y="13" width="1" height="1" fill="#fff"/><rect x="1" y="14" width="2" height="1" fill="#fff"/><rect x="3" y="14" width="1" height="1" fill="#000"/><rect x="4" y="14" width="2" height="1" fill="#808000"/><rect x="6" y="14" width="6" height="1" fill="#000"/><rect x="12" y="14" width="2" height="1" fill="#808000"/><rect x="14" y="14" width="1" height="1" fill="#000"/><rect x="15" y="14" width="2" height="1" fill="#fff"/><rect x="2" y="15" width="2" height="1" fill="#fff"/><rect x="4" y="15" width="2" height="1" fill="#000"/><rect x="6" y="15" width="1" height="1" fill="#808000"/><rect x="7" y="15" width="1" height="1" fill="#c0c0c0"/><rect x="8" y="15" width="1" height="1" fill="#000"/><rect x="9" y="15" width="3" height="1" fill="#808000"/><rect x="12" y="15" width="2" height="1" fill="#000"/><rect x="14" y="15" width="2" height="1" fill="#fff"/><rect x="3" y="16" width="3" height="1" fill="#fff"/><rect x="6" y="16" width="6" height="1" fill="#000"/><rect x="12" y="16" width="3" height="1" fill="#fff"/><rect x="5" y="17" width="8" height="1" fill="#fff"/></svg>
<svg class="a" style="left:383px;top:48px" width="17" height="16" viewBox="0 0 17 16" shape-rendering="crispEdges"><rect x="0" y="0" width="16" height="1" fill="#fff"/><rect x="0" y="1" width="1" height="1" fill="#fff"/><rect x="1" y="1" width="14" height="1" fill="#a0a0a0"/><rect x="15" y="1" width="2" height="1" fill="#fff"/><rect x="0" y="2" width="1" height="1" fill="#fff"/><rect x="1" y="2" width="1" height="1" fill="#a0a0a0"/><rect x="2" y="2" width="12" height="1" fill="#fff"/><rect x="14" y="2" width="2" height="1" fill="#a0a0a0"/><rect x="16" y="2" width="1" height="1" fill="#fff"/><rect x="0" y="3" width="1" height="1" fill="#fff"/><rect x="1" y="3" width="1" height="1" fill="#a0a0a0"/><rect x="2" y="3" width="1" height="1" fill="#fff"/><rect x="3" y="3" width="2" height="1" fill="#a0a0a0"/><rect x="5" y="3" width="1" height="1" fill="#fff"/><rect x="6" y="3" width="7" height="1" fill="#a0a0a0"/><rect x="13" y="3" width="1" height="1" fill="#fff"/><rect x="14" y="3" width="2" height="1" fill="#a0a0a0"/><rect x="16" y="3" width="1" height="1" fill="#fff"/><rect x="0" y="4" width="1" height="1" fill="#fff"/><rect x="1" y="4" width="1" height="1" fill="#a0a0a0"/><rect x="2" y="4" width="12" height="1" fill="#fff"/><rect x="14" y="4" width="2" height="1" fill="#a0a0a0"/><rect x="16" y="4" width="1" height="1" fill="#fff"/><rect x="0" y="5" width="1" height="1" fill="#fff"/><rect x="1" y="5" width="1" height="1" fill="#a0a0a0"/><rect x="2" y="5" width="4" height="1" fill="#fff"/><rect x="6" y="5" width="7" height="1" fill="#a0a0a0"/><rect x="13" y="5" width="1" height="1" fill="#fff"/><rect x="14" y="5" width="2" height="1" fill="#a0a0a0"/><rect x="16" y="5" width="1" height="1" fill="#fff"/><rect x="0" y="6" width="1" height="1" fill="#fff"/><rect x="1" y="6" width="1" height="1" fill="#a0a0a0"/><rect x="2" y="6" width="12" height="1" fill="#fff"/><rect x="14" y="6" width="2" height="1" fill="#a0a0a0"/><rect x="16" y="6" width="1" height="1" fill="#fff"/><rect x="0" y="7" width="1" height="1" fill="#fff"/><rect x="1" y="7" width="1" height="1" fill="#a0a0a0"/><rect x="2" y="7" width="4" height="1" fill="#fff"/><rect x="6" y="7" width="7" height="1" fill="#a0a0a0"/><rect x="13" y="7" width="1" height="1" fill="#fff"/><rect x="14" y="7" width="2" height="1" fill="#a0a0a0"/><rect x="16" y="7" width="1" height="1" fill="#fff"/><rect x="0" y="8" width="1" height="1" fill="#fff"/><rect x="1" y="8" width="1" height="1" fill="#a0a0a0"/><rect x="2" y="8" width="12" height="1" fill="#fff"/><rect x="14" y="8" width="2" height="1" fill="#a0a0a0"/><rect x="16" y="8" width="1" height="1" fill="#fff"/><rect x="0" y="9" width="1" height="1" fill="#fff"/><rect x="1" y="9" width="1" height="1" fill="#a0a0a0"/><rect x="2" y="9" width="4" height="1" fill="#fff"/><rect x="6" y="9" width="7" height="1" fill="#a0a0a0"/><rect x="13" y="9" width="1" height="1" fill="#fff"/><rect x="14" y="9" width="2" height="1" fill="#a0a0a0"/><rect x="16" y="9" width="1" height="1" fill="#fff"/><rect x="0" y="10" width="1" height="1" fill="#fff"/><rect x="1" y="10" width="1" height="1" fill="#a0a0a0"/><rect x="2" y="10" width="12" height="1" fill="#fff"/><rect x="14" y="10" width="2" height="1" fill="#a0a0a0"/><rect x="16" y="10" width="1" height="1" fill="#fff"/><rect x="0" y="11" width="1" height="1" fill="#fff"/><rect x="1" y="11" width="1" height="1" fill="#a0a0a0"/><rect x="2" y="11" width="1" height="1" fill="#fff"/><rect x="3" y="11" width="10" height="1" fill="#a0a0a0"/><rect x="13" y="11" width="1" height="1" fill="#fff"/><rect x="14" y="11" width="2" height="1" fill="#a0a0a0"/><rect x="16" y="11" width="1" height="1" fill="#fff"/><rect x="0" y="12" width="1" height="1" fill="#fff"/><rect x="1" y="12" width="1" height="1" fill="#a0a0a0"/><rect x="2" y="12" width="12" height="1" fill="#fff"/><rect x="14" y="12" width="2" height="1" fill="#a0a0a0"/><rect x="16" y="12" width="1" height="1" fill="#fff"/><rect x="0" y="13" width="1" height="1" fill="#fff"/><rect x="1" y="13" width="15" height="1" fill="#a0a0a0"/><rect x="16" y="13" width="1" height="1" fill="#fff"/><rect x="0" y="14" width="2" height="1" fill="#fff"/><rect x="2" y="14" width="14" height="1" fill="#a0a0a0"/><rect x="16" y="14" width="1" height="1" fill="#fff"/><rect x="1" y="15" width="16" height="1" fill="#fff"/></svg>
<svg class="a" style="left:458px;top:47px" width="18" height="18" viewBox="0 0 18 18" shape-rendering="crispEdges"><rect x="5" y="0" width="7" height="1" fill="#fff"/><rect x="3" y="1" width="3" height="1" fill="#fff"/><rect x="6" y="1" width="3" height="1" fill="#008000"/><rect x="9" y="1" width="1" height="1" fill="#00c000"/><rect x="10" y="1" width="1" height="1" fill="#0000ff"/><rect x="11" y="1" width="3" height="1" fill="#fff"/><rect x="2" y="2" width="2" height="1" fill="#fff"/><rect x="4" y="2" width="2" height="1" fill="#008000"/><rect x="6" y="2" width="2" height="1" fill="#00c000"/><rect x="8" y="2" width="1" height="1" fill="#008000"/><rect x="9" y="2" width="1" height="1" fill="#00ffff"/><rect x="10" y="2" width="3" height="1" fill="#0000ff"/><rect x="13" y="2" width="2" height="1" fill="#fff"/><rect x="1" y="3" width="2" height="1" fill="#fff"/><rect x="3" y="3" width="2" height="1" fill="#008000"/><rect x="5" y="3" width="1" height="1" fill="#00c000"/><rect x="6" y="3" width="1" height="1" fill="#008000"/><rect x="7" y="3" width="1" height="1" fill="#00c000"/><rect x="8" y="3" width="2" height="1" fill="#00ffff"/><rect x="10" y="3" width="1" height="1" fill="#0000ff"/><rect x="11" y="3" width="1" height="1" fill="#00ffff"/><rect x="12" y="3" width="1" height="1" fill="#0000ff"/><rect x="13" y="3" width="1" height="1" fill="#000"/><rect x="14" y="3" width="2" height="1" fill="#fff"/><rect x="1" y="4" width="1" height="1" fill="#fff"/><rect x="2" y="4" width="1" height="1" fill="#008000"/><rect x="3" y="4" width="1" height="1" fill="#fff"/><rect x="4" y="4" width="1" height="1" fill="#008000"/><rect x="5" y="4" width="2" height="1" fill="#00c000"/><rect x="7" y="4" width="2" height="1" fill="#00ffff"/><rect x="9" y="4" width="2" height="1" fill="#0000ff"/><rect x="11" y="4" width="1" height="1" fill="#00ffff"/><rect x="12" y="4" width="2" height="1" fill="#0000ff"/><rect x="14" y="4" width="1" height="1" fill="#000"/><rect x="15" y="4" width="1" height="1" fill="#fff"/><rect x="0" y="5" width="2" height="1" fill="#fff"/><rect x="2" y="5" width="1" height="1" fill="#0000ff"/><rect x="3" y="5" width="1" height="1" fill="#008000"/><rect x="4" y="5" width="1" height="1" fill="#00c000"/><rect x="5" y="5" width="1" height="1" fill="#008000"/><rect x="6" y="5" width="1" height="1" fill="#00ffff"/><rect x="7" y="5" width="1" height="1" fill="#00c000"/><rect x="8" y="5" width="2" height="1" fill="#00ffff"/><rect x="10" y="5" width="2" height="1" fill="#0000ff"/><rect x="12" y="5" width="1" height="1" fill="#00ffff"/><rect x="13" y="5" width="1" height="1" fill="#0000ff"/><rect x="14" y="5" width="1" height="1" fill="#000"/><rect x="15" y="5" width="2" height="1" fill="#fff"/><rect x="0" y="6" width="1" height="1" fill="#fff"/><rect x="1" y="6" width="1" height="1" fill="#0000ff"/><rect x="2" y="6" width="1" height="1" fill="#fff"/><rect x="3" y="6" width="1" height="1" fill="#00ffff"/><rect x="4" y="6" width="1" height="1" fill="#008000"/><rect x="5" y="6" width="1" height="1" fill="#00c000"/><rect x="6" y="6" width="3" height="1" fill="#00ffff"/><rect x="9" y="6" width="1" height="1" fill="#0000ff"/><rect x="10" y="6" width="1" height="1" fill="#00ffff"/><rect x="11" y="6" width="1" height="1" fill="#0000ff"/><rect x="12" y="6" width="2" height="1" fill="#00ffff"/><rect x="14" y="6" width="1" height="1" fill="#0000ff"/><rect x="15" y="6" width="1" height="1" fill="#000"/><rect x="16" y="6" width="1" height="1" fill="#fff"/><rect x="0" y="7" width="1" height="1" fill="#fff"/><rect x="1" y="7" width="1" height="1" fill="#0000ff"/><rect x="2" y="7" width="1" height="1" fill="#fff"/><rect x="3" y="7" width="1" height="1" fill="#00ffff"/><rect x="4" y="7" width="1" height="1" fill="#00c000"/><rect x="5" y="7" width="1" height="1" fill="#008000"/><rect x="6" y="7" width="2" height="1" fill="#00ffff"/><rect x="8" y="7" width="4" height="1" fill="#b8a4a4"/><rect x="12" y="7" width="1" height="1" fill="#0000ff"/><rect x="13" y="7" width="1" height="1" fill="#00ffff"/><rect x="14" y="7" width="1" height="1" fill="#0000ff"/><rect x="15" y="7" width="1" height="1" fill="#000"/><rect x="16" y="7" width="1" height="1" fill="#fff"/><rect x="0" y="8" width="1" height="1" fill="#fff"/><rect x="1" y="8" width="1" height="1" fill="#008000"/><rect x="2" y="8" width="1" height="1" fill="#00c000"/><rect x="3" y="8" width="2" height="1" fill="#00ffff"/><rect x="5" y="8" width="1" height="1" fill="#00c000"/><rect x="6" y="8" width="1" height="1" fill="#00ffff"/><rect x="7" y="8" width="1" height="1" fill="#b8a4a4"/><rect x="8" y="8" width="4" height="1" fill="#fff"/><rect x="12" y="8" width="1" height="1" fill="#b8a4a4"/><rect x="13" y="8" width="1" height="1" fill="#00ffff"/><rect x="14" y="8" width="1" height="1" fill="#0000ff"/><rect x="15" y="8" width="1" height="1" fill="#000"/><rect x="16" y="8" width="1" height="1" fill="#fff"/><rect x="0" y="9" width="1" height="1" fill="#fff"/><rect x="1" y="9" width="2" height="1" fill="#008000"/><rect x="3" y="9" width="1" height="1" fill="#00c000"/><rect x="4" y="9" width="2" height="1" fill="#00ffff"/><rect x="6" y="9" width="1" height="1" fill="#b8a4a4"/><rect x="7" y="9" width="2" height="1" fill="#fff"/><rect x="9" y="9" width="1" height="1" fill="#b8a4a4"/><rect x="10" y="9" width="1" height="1" fill="#fff"/><rect x="11" y="9" width="2" height="1" fill="#00ffff"/><rect x="13" y="9" width="1" height="1" fill="#b8a4a4"/><rect x="14" y="9" width="1" height="1" fill="#0000ff"/><rect x="15" y="9" width="1" height="1" fill="#000"/><rect x="16" y="9" width="1" height="1" fill="#fff"/><rect x="0" y="10" width="1" height="1" fill="#fff"/><rect x="1" y="10" width="1" height="1" fill="#008000"/><rect x="2" y="10" width="1" height="1" fill="#fff"/><rect x="3" y="10" width="1" height="1" fill="#008000"/><rect x="4" y="10" width="1" height="1" fill="#00c000"/><rect x="5" y="10" width="1" height="1" fill="#00ffff"/><rect x="6" y="10" width="1" height="1" fill="#b8a4a4"/><rect x="7" y="10" width="2" height="1" fill="#fff"/><rect x="9" y="10" width="1" height="1" fill="#b8a4a4"/><rect x="10" y="10" width="2" height="1" fill="#00ffff"/><rect x="12" y="10" width="2" height="1" fill="#b8a4a4"/><rect x="14" y="10" width="1" height="1" fill="#0000ff"/><rect x="15" y="10" width="1" height="1" fill="#000"/><rect x="16" y="10" width="1" height="1" fill="#fff"/><rect x="0" y="11" width="1" height="1" fill="#fff"/><rect x="1" y="11" width="2" height="1" fill="#008000"/><rect x="3" y="11" width="2" height="1" fill="#00c000"/><rect x="5" y="11" width="1" height="1" fill="#008000"/><rect x="6" y="11" width="1" height="1" fill="#b8a4a4"/><rect x="7" y="11" width="2" height="1" fill="#fff"/><rect x="9" y="11" width="3" height="1" fill="#00ffff"/><rect x="12" y="11" width="1" height="1" fill="#b8a4a4"/><rect x="13" y="11" width="2" height="1" fill="#000"/><rect x="15" y="11" width="2" height="1" fill="#fff"/><rect x="0" y="12" width="2" height="1" fill="#fff"/><rect x="2" y="12" width="3" height="1" fill="#008000"/><rect x="5" y="12" width="1" height="1" fill="#00c000"/><rect x="6" y="12" width="1" height="1" fill="#008000"/><rect x="7" y="12" width="1" height="1" fill="#b8a4a4"/><rect x="8" y="12" width="3" height="1" fill="#00ffff"/><rect x="11" y="12" width="1" height="1" fill="#b8a4a4"/><rect x="12" y="12" width="1" height="1" fill="#000"/><rect x="13" y="12" width="1" height="1" fill="#ff0000"/><rect x="14" y="12" width="1" height="1" fill="#000"/><rect x="15" y="12" width="2" height="1" fill="#fff"/><rect x="1" y="13" width="1" height="1" fill="#fff"/><rect x="2" y="13" width="6" height="1" fill="#008000"/><rect x="8" y="13" width="3" height="1" fill="#b8a4a4"/><rect x="11" y="13" width="1" height="1" fill="#000"/><rect x="12" y="13" width="3" height="1" fill="#ff0000"/><rect x="15" y="13" width="1" height="1" fill="#000"/><rect x="16" y="13" width="2" height="1" fill="#fff"/><rect x="1" y="14" width="2" height="1" fill="#fff"/><rect x="3" y="14" width="2" height="1" fill="#000"/><rect x="5" y="14" width="1" height="1" fill="#008000"/><rect x="6" y="14" width="4" height="1" fill="#0000ff"/><rect x="10" y="14" width="2" height="1" fill="#000"/><rect x="12" y="14" width="1" height="1" fill="#ff0000"/><rect x="13" y="14" width="1" height="1" fill="#fff"/><rect x="14" y="14" width="2" height="1" fill="#ff0000"/><rect x="16" y="14" width="1" height="1" fill="#000"/><rect x="17" y="14" width="1" height="1" fill="#fff"/><rect x="2" y="15" width="2" height="1" fill="#fff"/><rect x="4" y="15" width="7" height="1" fill="#000"/><rect x="11" y="15" width="2" height="1" fill="#fff"/><rect x="13" y="15" width="1" height="1" fill="#ff0000"/><rect x="14" y="15" width="1" height="1" fill="#ffff00"/><rect x="15" y="15" width="1" height="1" fill="#ff0000"/><rect x="16" y="15" width="1" height="1" fill="#000"/><rect x="17" y="15" width="1" height="1" fill="#fff"/><rect x="3" y="16" width="11" height="1" fill="#fff"/><rect x="14" y="16" width="2" height="1" fill="#000"/><rect x="16" y="16" width="2" height="1" fill="#fff"/><rect x="13" y="17" width="4" height="1" fill="#fff"/></svg>
<svg class="a" style="left:526px;top:47px" width="18" height="18" viewBox="0 0 18 18" shape-rendering="crispEdges"><rect x="5" y="0" width="8" height="1" fill="#fff"/><rect x="3" y="1" width="3" height="1" fill="#fff"/><rect x="6" y="1" width="6" height="1" fill="#a0a0a0"/><rect x="12" y="1" width="3" height="1" fill="#fff"/><rect x="2" y="2" width="2" height="1" fill="#fff"/><rect x="4" y="2" width="10" height="1" fill="#a0a0a0"/><rect x="14" y="2" width="2" height="1" fill="#fff"/><rect x="1" y="3" width="2" height="1" fill="#fff"/><rect x="3" y="3" width="12" height="1" fill="#a0a0a0"/><rect x="15" y="3" width="2" height="1" fill="#fff"/><rect x="1" y="4" width="1" height="1" fill="#fff"/><rect x="2" y="4" width="14" height="1" fill="#a0a0a0"/><rect x="16" y="4" width="1" height="1" fill="#fff"/><rect x="0" y="5" width="2" height="1" fill="#fff"/><rect x="2" y="5" width="3" height="1" fill="#a0a0a0"/><rect x="5" y="5" width="3" height="1" fill="#fff"/><rect x="8" y="5" width="2" height="1" fill="#a0a0a0"/><rect x="10" y="5" width="3" height="1" fill="#fff"/><rect x="13" y="5" width="3" height="1" fill="#a0a0a0"/><rect x="16" y="5" width="2" height="1" fill="#fff"/><rect x="0" y="6" width="1" height="1" fill="#fff"/><rect x="1" y="6" width="4" height="1" fill="#a0a0a0"/><rect x="5" y="6" width="8" height="1" fill="#fff"/><rect x="13" y="6" width="4" height="1" fill="#a0a0a0"/><rect x="17" y="6" width="1" height="1" fill="#fff"/><rect x="0" y="7" width="1" height="1" fill="#fff"/><rect x="1" y="7" width="5" height="1" fill="#a0a0a0"/><rect x="6" y="7" width="6" height="1" fill="#fff"/><rect x="12" y="7" width="5" height="1" fill="#a0a0a0"/><rect x="17" y="7" width="1" height="1" fill="#fff"/><rect x="0" y="8" width="1" height="1" fill="#fff"/><rect x="1" y="8" width="6" height="1" fill="#a0a0a0"/><rect x="7" y="8" width="4" height="1" fill="#fff"/><rect x="11" y="8" width="6" height="1" fill="#a0a0a0"/><rect x="17" y="8" width="1" height="1" fill="#fff"/><rect x="0" y="9" width="1" height="1" fill="#fff"/><rect x="1" y="9" width="5" height="1" fill="#a0a0a0"/><rect x="6" y="9" width="6" height="1" fill="#fff"/><rect x="12" y="9" width="5" height="1" fill="#a0a0a0"/><rect x="17" y="9" width="1" height="1" fill="#fff"/><rect x="0" y="10" width="1" height="1" fill="#fff"/><rect x="1" y="10" width="4" height="1" fill="#a0a0a0"/><rect x="5" y="10" width="8" height="1" fill="#fff"/><rect x="13" y="10" width="4" height="1" fill="#a0a0a0"/><rect x="17" y="10" width="1" height="1" fill="#fff"/><rect x="0" y="11" width="1" height="1" fill="#fff"/><rect x="1" y="11" width="4" height="1" fill="#a0a0a0"/><rect x="5" y="11" width="3" height="1" fill="#fff"/><rect x="8" y="11" width="2" height="1" fill="#a0a0a0"/><rect x="10" y="11" width="3" height="1" fill="#fff"/><rect x="13" y="11" width="4" height="1" fill="#a0a0a0"/><rect x="17" y="11" width="1" height="1" fill="#fff"/><rect x="0" y="12" width="2" height="1" fill="#fff"/><rect x="2" y="12" width="14" height="1" fill="#a0a0a0"/><rect x="16" y="12" width="2" height="1" fill="#fff"/><rect x="1" y="13" width="1" height="1" fill="#fff"/><rect x="2" y="13" width="14" height="1" fill="#a0a0a0"/><rect x="16" y="13" width="1" height="1" fill="#fff"/><rect x="1" y="14" width="2" height="1" fill="#fff"/><rect x="3" y="14" width="12" height="1" fill="#a0a0a0"/><rect x="15" y="14" width="2" height="1" fill="#fff"/><rect x="2" y="15" width="2" height="1" fill="#fff"/><rect x="4" y="15" width="10" height="1" fill="#a0a0a0"/><rect x="14" y="15" width="2" height="1" fill="#fff"/><rect x="3" y="16" width="3" height="1" fill="#fff"/><rect x="6" y="16" width="6" height="1" fill="#a0a0a0"/><rect x="12" y="16" width="3" height="1" fill="#fff"/><rect x="5" y="17" width="8" height="1" fill="#fff"/></svg>
<svg class="a" style="left:594px;top:47px" width="18" height="18" viewBox="0 0 18 18" shape-rendering="crispEdges"><rect x="5" y="0" width="8" height="1" fill="#fff"/><rect x="3" y="1" width="3" height="1" fill="#fff"/><rect x="6" y="1" width="6" height="1" fill="#a0a0a0"/><rect x="12" y="1" width="3" height="1" fill="#fff"/><rect x="2" y="2" width="2" height="1" fill="#fff"/><rect x="4" y="2" width="10" height="1" fill="#a0a0a0"/><rect x="14" y="2" width="2" height="1" fill="#fff"/><rect x="1" y="3" width="2" height="1" fill="#fff"/><rect x="3" y="3" width="12" height="1" fill="#a0a0a0"/><rect x="15" y="3" width="2" height="1" fill="#fff"/><rect x="1" y="4" width="1" height="1" fill="#fff"/><rect x="2" y="4" width="14" height="1" fill="#a0a0a0"/><rect x="16" y="4" width="1" height="1" fill="#fff"/><rect x="0" y="5" width="2" height="1" fill="#fff"/><rect x="2" y="5" width="14" height="1" fill="#a0a0a0"/><rect x="16" y="5" width="2" height="1" fill="#fff"/><rect x="0" y="6" width="1" height="1" fill="#fff"/><rect x="1" y="6" width="4" height="1" fill="#a0a0a0"/><rect x="5" y="6" width="3" height="1" fill="#fff"/><rect x="8" y="6" width="2" height="1" fill="#a0a0a0"/><rect x="10" y="6" width="3" height="1" fill="#fff"/><rect x="13" y="6" width="4" height="1" fill="#a0a0a0"/><rect x="17" y="6" width="1" height="1" fill="#fff"/><rect x="0" y="7" width="1" height="1" fill="#fff"/><rect x="1" y="7" width="5" height="1" fill="#a0a0a0"/><rect x="6" y="7" width="6" height="1" fill="#fff"/><rect x="12" y="7" width="5" height="1" fill="#a0a0a0"/><rect x="17" y="7" width="1" height="1" fill="#fff"/><rect x="0" y="8" width="1" height="1" fill="#fff"/><rect x="1" y="8" width="6" height="1" fill="#a0a0a0"/><rect x="7" y="8" width="4" height="1" fill="#fff"/><rect x="11" y="8" width="6" height="1" fill="#a0a0a0"/><rect x="17" y="8" width="1" height="1" fill="#fff"/><rect x="0" y="9" width="1" height="1" fill="#fff"/><rect x="1" y="9" width="5" height="1" fill="#a0a0a0"/><rect x="6" y="9" width="6" height="1" fill="#fff"/><rect x="12" y="9" width="5" height="1" fill="#a0a0a0"/><rect x="17" y="9" width="1" height="1" fill="#fff"/><rect x="0" y="10" width="1" height="1" fill="#fff"/><rect x="1" y="10" width="4" height="1" fill="#a0a0a0"/><rect x="5" y="10" width="3" height="1" fill="#fff"/><rect x="8" y="10" width="2" height="1" fill="#a0a0a0"/><rect x="10" y="10" width="3" height="1" fill="#fff"/><rect x="13" y="10" width="4" height="1" fill="#a0a0a0"/><rect x="17" y="10" width="1" height="1" fill="#fff"/><rect x="0" y="11" width="1" height="1" fill="#fff"/><rect x="1" y="11" width="16" height="1" fill="#a0a0a0"/><rect x="17" y="11" width="1" height="1" fill="#fff"/><rect x="0" y="12" width="2" height="1" fill="#fff"/><rect x="2" y="12" width="14" height="1" fill="#a0a0a0"/><rect x="16" y="12" width="2" height="1" fill="#fff"/><rect x="1" y="13" width="1" height="1" fill="#fff"/><rect x="2" y="13" width="14" height="1" fill="#a0a0a0"/><rect x="16" y="13" width="1" height="1" fill="#fff"/><rect x="1" y="14" width="2" height="1" fill="#fff"/><rect x="3" y="14" width="12" height="1" fill="#a0a0a0"/><rect x="15" y="14" width="2" height="1" fill="#fff"/><rect x="2" y="15" width="2" height="1" fill="#fff"/><rect x="4" y="15" width="10" height="1" fill="#a0a0a0"/><rect x="14" y="15" width="2" height="1" fill="#fff"/><rect x="3" y="16" width="3" height="1" fill="#fff"/><rect x="6" y="16" width="6" height="1" fill="#a0a0a0"/><rect x="12" y="16" width="3" height="1" fill="#fff"/><rect x="5" y="17" width="8" height="1" fill="#fff"/></svg>
<svg class="a" style="left:677px;top:47px" width="12" height="16" viewBox="0 0 12 16" shape-rendering="crispEdges"><rect x="2" y="0" width="8" height="1" fill="#fff"/><rect x="1" y="1" width="2" height="1" fill="#fff"/><rect x="3" y="1" width="6" height="1" fill="#000"/><rect x="9" y="1" width="2" height="1" fill="#fff"/><rect x="0" y="2" width="2" height="1" fill="#fff"/><rect x="2" y="2" width="1" height="1" fill="#000"/><rect x="3" y="2" width="6" height="1" fill="#fff"/><rect x="9" y="2" width="1" height="1" fill="#000"/><rect x="10" y="2" width="2" height="1" fill="#fff"/><rect x="0" y="3" width="1" height="1" fill="#fff"/><rect x="1" y="3" width="1" height="1" fill="#000"/><rect x="2" y="3" width="2" height="1" fill="#fff"/><rect x="4" y="3" width="3" height="1" fill="#000"/><rect x="7" y="3" width="2" height="1" fill="#fff"/><rect x="9" y="3" width="2" height="1" fill="#000"/><rect x="11" y="3" width="1" height="1" fill="#fff"/><rect x="0" y="4" width="1" height="1" fill="#fff"/><rect x="1" y="4" width="1" height="1" fill="#000"/><rect x="2" y="4" width="1" height="1" fill="#fff"/><rect x="3" y="4" width="1" height="1" fill="#000"/><rect x="4" y="4" width="3" height="1" fill="#fff"/><rect x="7" y="4" width="1" height="1" fill="#000"/><rect x="8" y="4" width="1" height="1" fill="#fff"/><rect x="9" y="4" width="2" height="1" fill="#000"/><rect x="11" y="4" width="1" height="1" fill="#fff"/><rect x="0" y="5" width="1" height="1" fill="#fff"/><rect x="1" y="5" width="3" height="1" fill="#000"/><rect x="4" y="5" width="2" height="1" fill="#fff"/><rect x="6" y="5" width="1" height="1" fill="#000"/><rect x="7" y="5" width="1" height="1" fill="#fff"/><rect x="8" y="5" width="3" height="1" fill="#000"/><rect x="11" y="5" width="1" height="1" fill="#fff"/><rect x="0" y="6" width="2" height="1" fill="#fff"/><rect x="2" y="6" width="2" height="1" fill="#000"/><rect x="4" y="6" width="1" height="1" fill="#fff"/><rect x="5" y="6" width="1" height="1" fill="#000"/><rect x="6" y="6" width="1" height="1" fill="#fff"/><rect x="7" y="6" width="3" height="1" fill="#000"/><rect x="10" y="6" width="2" height="1" fill="#fff"/><rect x="1" y="7" width="3" height="1" fill="#fff"/><rect x="4" y="7" width="1" height="1" fill="#000"/><rect x="5" y="7" width="1" height="1" fill="#fff"/><rect x="6" y="7" width="3" height="1" fill="#000"/><rect x="9" y="7" width="2" height="1" fill="#fff"/><rect x="3" y="8" width="1" height="1" fill="#fff"/><rect x="4" y="8" width="1" height="1" fill="#000"/><rect x="5" y="8" width="1" height="1" fill="#fff"/><rect x="6" y="8" width="2" height="1" fill="#000"/><rect x="8" y="8" width="2" height="1" fill="#fff"/><rect x="3" y="9" width="1" height="1" fill="#fff"/><rect x="4" y="9" width="1" height="1" fill="#000"/><rect x="5" y="9" width="1" height="1" fill="#fff"/><rect x="6" y="9" width="2" height="1" fill="#000"/><rect x="8" y="9" width="1" height="1" fill="#fff"/><rect x="3" y="10" width="1" height="1" fill="#fff"/><rect x="4" y="10" width="1" height="1" fill="#000"/><rect x="5" y="10" width="1" height="1" fill="#fff"/><rect x="6" y="10" width="2" height="1" fill="#000"/><rect x="8" y="10" width="1" height="1" fill="#fff"/><rect x="3" y="11" width="2" height="1" fill="#fff"/><rect x="5" y="11" width="2" height="1" fill="#000"/><rect x="7" y="11" width="3" height="1" fill="#fff"/><rect x="3" y="12" width="1" height="1" fill="#fff"/><rect x="4" y="12" width="1" height="1" fill="#000"/><rect x="5" y="12" width="2" height="1" fill="#fff"/><rect x="7" y="12" width="2" height="1" fill="#000"/><rect x="9" y="12" width="1" height="1" fill="#fff"/><rect x="3" y="13" width="1" height="1" fill="#fff"/><rect x="4" y="13" width="1" height="1" fill="#000"/><rect x="5" y="13" width="2" height="1" fill="#fff"/><rect x="7" y="13" width="2" height="1" fill="#000"/><rect x="9" y="13" width="1" height="1" fill="#fff"/><rect x="3" y="14" width="2" height="1" fill="#fff"/><rect x="5" y="14" width="3" height="1" fill="#000"/><rect x="8" y="14" width="2" height="1" fill="#fff"/><rect x="4" y="15" width="5" height="1" fill="#fff"/></svg>
<div class="t" style="left:19.50px;top:66.84px;font-size:12px;color:#000;transform:scaleX(0.9856);">Открыть</div>
<div class="t" style="left:81.50px;top:66.84px;font-size:12px;color:#000;transform:scaleX(0.9768);">Сохранить</div>
<div class="t" style="left:159.20px;top:66.84px;font-size:12px;color:#000;transform:scaleX(0.9857);">Печать</div>
<div class="sep" style="left:214px"></div>
<div class="t" style="left:234.60px;top:66.84px;font-size:12px;color:#a0a0a0;transform:scaleX(0.9323);">Отчет</div>
<div class="sep" style="left:286px"></div>
<div class="t" style="left:292.00px;top:66.84px;font-size:12px;color:#000;transform:scaleX(0.9700);">Узлы учета</div>
<div class="t" style="left:364.60px;top:66.84px;font-size:12px;color:#a0a0a0;transform:scaleX(1.0274);">Приборы</div>
<div class="sep" style="left:428px"></div>
<div class="t" style="left:442.30px;top:66.84px;font-size:12px;color:#000;transform:scaleX(0.9731);">Уст.связь</div>
<div class="t" style="left:510.80px;top:66.84px;font-size:12px;color:#a0a0a0;transform:scaleX(0.9245);">Раз.связь</div>
<div class="t" style="left:590.00px;top:66.84px;font-size:12px;color:#a0a0a0;transform:scaleX(0.9513);">Стоп</div>
<div class="sep" style="left:642px"></div>
<div class="t" style="left:666.20px;top:66.84px;font-size:12px;color:#000;transform:scaleX(1.0242);">About</div>
<div class="a" style="left:766px;top:45px;width:2px;height:38px;border-left:1px solid #a0a0a0;border-right:1px solid #fff"></div>
<div class="a" style="left:770px;top:47px;width:3px;height:34px;border-left:2px solid #fff;border-right:1px solid #a0a0a0;border-bottom:1px solid #a0a0a0"></div>
<div class="t" style="left:777.00px;top:57.42px;font-size:12.5px;color:#000;transform:scaleX(0.9158);">Узел учета:</div>
<div class="t" style="left:839.60px;top:57.42px;font-size:12.5px;color:#000;transform:scaleX(0.8616);">ТСЖ Светлана 81-2</div>
<div class="t" style="left:948.40px;top:57.42px;font-size:12.5px;color:#000;transform:scaleX(0.8688);">(модем)</div>
<!-- CLIENT -->
<div id="client" class="a"></div>
<!-- STATUS BARS -->
<div id="status1" class="a"></div>
<div class="pane" style="left:0px;width:841px"></div>
<div class="pane" style="left:842px;width:185px"></div>
<div class="pane" style="left:1028px;width:112px"></div>
<div class="pane" style="left:1141px;width:65px"></div>
<div class="pane" style="left:1207px;width:62px"></div>
<div class="pane" style="left:1270px;width:47px"></div>
<div class="pane" style="left:1318px;width:47px"></div>
<svg class="a" style="left:1210px;top:691px" width="56" height="15" viewBox="0 0 56 15">
  <circle cx="12.7" cy="7.7" r="5.6" fill="#fff" stroke="#000" stroke-width="1"/>
  <circle cx="44.8" cy="7.7" r="5.6" fill="#fff" stroke="#000" stroke-width="1"/>
</svg>
<div class="t" style="left:1277.50px;top:693.42px;font-size:12.5px;color:#000;transform:scaleX(0.8250);">COM 4</div>
<div class="t" style="left:1330.70px;top:693.42px;font-size:12.5px;color:#000;transform:scaleX(0.8652);">9600</div>
<div id="status2" class="a"></div>
<div class="t" style="left:2.10px;top:713.84px;font-size:12px;color:#000;transform:scaleX(0.9196);">Ready</div>
<div class="pane" style="left:1266px;top:711px;width:28px;height:17px"></div>
<div class="pane" style="left:1297px;top:711px;width:34px;height:17px"></div>
<div class="pane" style="left:1333px;top:711px;width:32px;height:17px"></div>
<div class="t" style="left:1299.50px;top:713.84px;font-size:12px;color:#000;transform:scaleX(0.9952);">NUM</div>
<div id="taskbar" class="a">
  <div class="a" style="left:778px;top:0;width:160px;height:7px;background:#46444e"></div>
  <div class="a" style="left:1361px;top:0;width:1px;height:7px;background:#80808a"></div>
</div>
<div class="a" style="left:0;top:727px;width:1365px;height:1px;background:#fbfbfb"></div>
<div class="t" style="left:1268.00px;top:731.84px;font-size:12px;color:#fff;transform:scaleX(0.7906);">12:15</div>
<!-- DIALOG 1 -->
<div class="dlg" style="left:371px;top:208px;width:625px;height:311px;border:1px solid #b4b4b4;box-shadow:0 2px 12px rgba(0,0,0,.36)"></div>
<div class="a" style="left:372px;top:209px;width:623px;height:25px;background:#fff"></div>
<div class="t" style="left:375.60px;top:215.42px;font-size:12.5px;color:#999;transform:scaleX(0.9311);">Содержимое узла учета "ТСЖ Светлана 81-2"</div>
<svg class="a" style="left:974px;top:215px" width="12" height="12" viewBox="0 0 12 12"><path d="M1 1l10 10M11 1l-10 10" stroke="#888" fill="none"/></svg>
<div class="grp" style="left:383px;top:251px;width:490px;height:235px"></div>
<div class="cov" style="left:390px;top:250px;width:60px"></div>
<div class="t" style="left:392.60px;top:246.42px;font-size:12.5px;color:#000;transform:scaleX(0.7930);">Список</div>
<div class="edit" style="left:389px;top:260px;width:478px;height:220px"></div>
<div class="a" style="left:391px;top:262px;width:474px;height:16px;background:#f0f0f0;border-top:1px solid #fff;border-left:1px solid #fff;border-bottom:1px solid #a0a0a0"></div>
<div class="t" style="left:396.92px;top:265.42px;font-size:12.5px;color:#000;transform:scaleX(0.7808);">Номер</div>
<div class="t" style="left:396.00px;top:282.42px;font-size:12.5px;color:#000;transform:scaleX(0.7857);">0</div>
<div class="a" style="left:391px;top:278px;width:474px;height:200px;background:repeating-linear-gradient(to bottom,transparent 0,transparent 2px,#ededed 2px,#ededed 3px,transparent 3px,transparent 14px)"></div>
<div class="btn" style="left:885px;top:252px;width:99px;height:23px"></div>
<div class="btn" style="left:885px;top:280px;width:99px;height:23px"></div>
<div class="btn" style="left:885px;top:308px;width:99px;height:23px"></div>
<div class="btn" style="left:885px;top:336px;width:99px;height:23px"></div>
<div class="btn" style="left:885px;top:366px;width:99px;height:23px"></div>
<div class="t" style="left:927.00px;top:257.42px;font-size:12.5px;color:#000;transform:scaleX(0.8546);">OK</div>
<div class="t" style="left:915.00px;top:285.42px;font-size:12.5px;color:#000;transform:scaleX(0.8687);">Отмена</div>
<div class="t" style="left:910.30px;top:313.42px;font-size:12.5px;color:#000;transform:scaleX(0.8843);">Добавить</div>
<div class="t" style="left:913.00px;top:341.42px;font-size:12.5px;color:#000;transform:scaleX(0.9108);">Удалить</div>
<div class="t" style="left:894.69px;top:371.42px;font-size:12.5px;color:#000;transform:scaleX(0.9147);">Редактировать</div>
<div class="a" style="left:383px;top:492px;width:13px;height:13px;background:#fff;border:1px solid;border-color:#a0a0a0 #fff #fff #a0a0a0;box-shadow:inset 1px 1px 0 #696969,inset -1px -1px 0 #e3e3e3"></div>
<div class="t" style="left:401.00px;top:493.42px;font-size:12.5px;color:#000;transform:scaleX(0.8884);">Автоматически устанавливать связь после выбора узла</div>
<!--D1END-->
<!-- DIALOG 2 -->
<div class="dlg" style="left:426px;top:227px;width:514px;height:272px;border:1px solid #747474;box-shadow:0 2px 12px rgba(0,0,0,.36)"></div>
<div class="a" style="left:427px;top:228px;width:512px;height:25px;background:#fff"></div>
<div class="t" style="left:430.50px;top:234.42px;font-size:12.5px;color:#000;transform:scaleX(0.9319);">Создать/Редактировать</div>
<svg class="a" style="left:918px;top:234px" width="12" height="12" viewBox="0 0 12 12"><path d="M1 1l10 10M11 1l-10 10" stroke="#000" stroke-width="1.25" fill="none"/></svg>
<!-- raised panel -->
<div class="a" style="left:438px;top:264px;width:378px;height:228px;border:1px solid;border-color:#fff #696969 #696969 #fff"></div>
<!-- group 1 -->
<div class="grp" style="left:447px;top:275px;width:181px;height:139px"></div>
<div class="cov" style="left:473px;top:274px;width:130px"></div>
<div class="t" style="left:475.60px;top:270.42px;font-size:12.5px;color:#000;transform:scaleX(0.8502);">Служебная информация:</div>
<div class="t" style="left:460.30px;top:283.42px;font-size:12.5px;color:#000;transform:scaleX(0.8626);">Сетевой номер (вычислителя):</div>
<div class="edit" style="left:459px;top:299px;width:138px;height:23px"></div>
<div class="a" style="left:462px;top:302px;width:7px;height:13px;background:#0078d7"></div>
<div class="t" style="left:462.60px;top:304.42px;font-size:12.5px;color:#fff;transform:scaleX(0.8286);">0</div>
<div class="t" style="left:459.42px;top:327.42px;font-size:12.5px;color:#000;transform:scaleX(0.8769);">Примечание:</div>
<div class="edit" style="left:459px;top:342px;width:138px;height:23px"></div>
<div class="t" style="left:465.00px;top:369.42px;font-size:12.5px;color:#000;transform:scaleX(0.8550);">Абонент:</div>
<div class="edit" style="left:459px;top:385px;width:138px;height:23px"></div>
<div class="t" style="left:462.60px;top:389.42px;font-size:12.5px;color:#000;transform:scaleX(0.8633);">ТСЖ Светлана</div>
<!-- group 2 -->
<div class="grp" style="left:634px;top:275px;width:169px;height:139px"></div>
<div class="cov" style="left:665px;top:274px;width:109px"></div>
<div class="t" style="left:667.00px;top:270.42px;font-size:12.5px;color:#000;transform:scaleX(0.8766);">Для печати в отчете:</div>
<div class="t" style="left:644.00px;top:285.42px;font-size:12.5px;color:#000;transform:scaleX(0.8944);">Договор №:</div>
<div class="edit" style="left:643px;top:299px;width:152px;height:23px"></div>
<div class="t" style="left:643.00px;top:327.42px;font-size:12.5px;color:#000;transform:scaleX(0.8766);">Адрес:</div>
<div class="edit" style="left:643px;top:342px;width:152px;height:23px"></div>
<div class="t" style="left:646.00px;top:347.42px;font-size:12.5px;color:#000;transform:scaleX(0.8958);">ул. Гаражная, д. 81/2</div>
<div class="t" style="left:644.00px;top:369.42px;font-size:12.5px;color:#000;transform:scaleX(0.8755);">Тип расходомера:</div>
<div class="edit" style="left:643px;top:385px;width:152px;height:23px"></div>
<!-- group IP -->
<div class="grp" style="left:447px;top:422px;width:356px;height:50px"></div>
<div class="cov" style="left:598px;top:421px;width:54px"></div>
<div class="t" style="left:599.44px;top:417.42px;font-size:12.5px;color:#000;transform:scaleX(0.8622);">IP network</div>
<div class="t" style="left:453.90px;top:426.42px;font-size:12.5px;color:#000;transform:scaleX(0.8450);">TCP(UDP) порт:</div>
<div class="t" style="left:534.73px;top:426.42px;font-size:12.5px;color:#000;transform:scaleX(0.8668);">IP адрес:</div>
<div class="t" style="left:690.29px;top:426.42px;font-size:12.5px;color:#000;transform:scaleX(0.9127);">Режим:</div>
<div class="edit dis" style="left:453px;top:442px;width:75px;height:23px"></div>
<div class="edit dis" style="left:532px;top:442px;width:150px;height:23px"></div>
<div class="t" style="left:545.10px;top:446.42px;font-size:12.5px;color:#7a7a7a;transform:scaleX(0.8467);">255</div>
<div class="t" style="left:581.10px;top:446.42px;font-size:12.5px;color:#7a7a7a;transform:scaleX(0.8467);">255</div>
<div class="t" style="left:617.10px;top:446.42px;font-size:12.5px;color:#7a7a7a;transform:scaleX(0.8467);">255</div>
<div class="t" style="left:653.10px;top:446.42px;font-size:12.5px;color:#7a7a7a;transform:scaleX(0.8467);">255</div>
<div class="t" style="left:569.90px;top:446.42px;font-size:12.5px;color:#7a7a7a;transform:scaleX(0.7000);">.</div>
<div class="t" style="left:605.90px;top:446.42px;font-size:12.5px;color:#7a7a7a;transform:scaleX(0.7000);">.</div>
<div class="t" style="left:641.90px;top:446.42px;font-size:12.5px;color:#7a7a7a;transform:scaleX(0.7000);">.</div>
<!-- buttons -->
<div class="a" style="left:826px;top:264px;width:102px;height:23px;border:1px solid #696969"></div>
<div class="btn" style="left:827px;top:265px;width:100px;height:21px"></div>
<div class="t" style="left:870.20px;top:269.42px;font-size:12.5px;color:#000;transform:scaleX(0.7798);">OK</div>
<div class="btn" style="left:826px;top:292px;width:102px;height:23px"></div>
<div class="t" style="left:857.60px;top:297.42px;font-size:12.5px;color:#000;transform:scaleX(0.8687);">Отмена</div>
<!--D2END-->
</body></html>
